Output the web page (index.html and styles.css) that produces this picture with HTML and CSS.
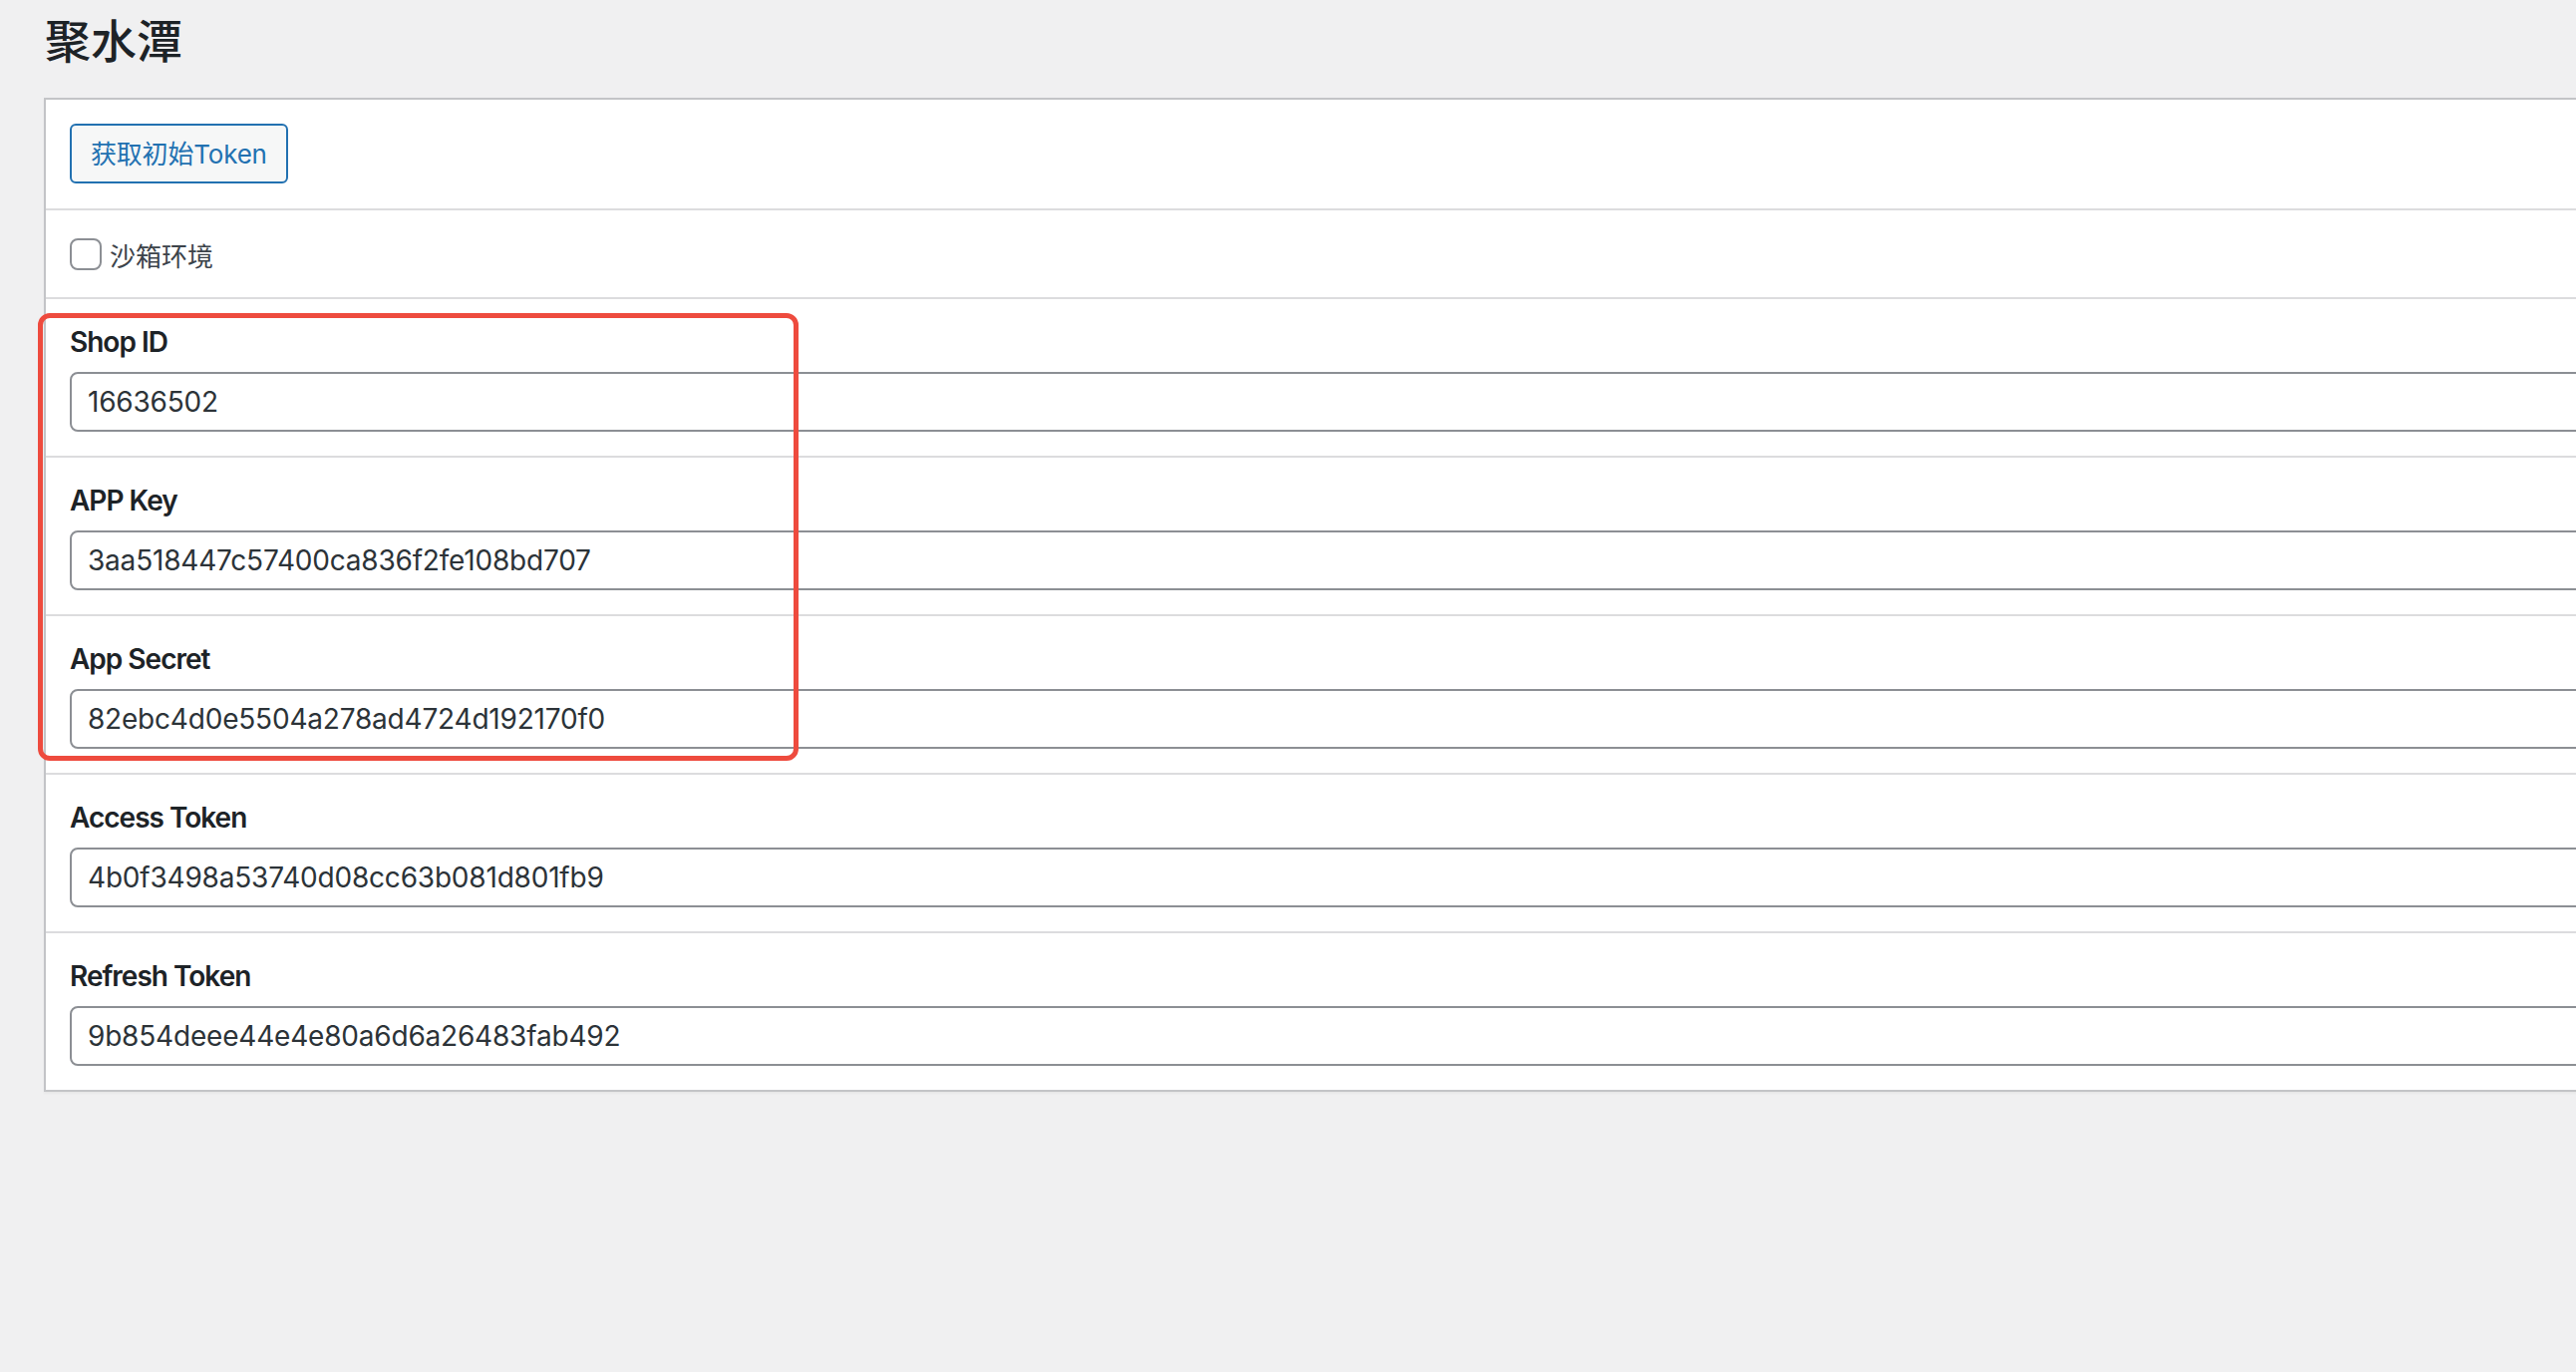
FILE: index.html
```html
<!DOCTYPE html>
<html lang="zh-CN">
<head>
<meta charset="utf-8">
<title>聚水潭</title>
<link rel="stylesheet" href="styles.css">
</head>
<body>
<div class="page">
  <h1 class="title">聚水潭</h1>
  <div class="card">
    <div class="row row-button">
      <button class="btn" type="button">获取初始Token</button>
    </div>
    <div class="row row-check">
      <label class="check-label"><span class="checkbox"></span><span>沙箱环境</span></label>
    </div>
    <div class="row field">
      <label class="field-label">Shop ID</label>
      <input class="field-input" type="text" value="16636502">
    </div>
    <div class="row field">
      <label class="field-label">APP Key</label>
      <input class="field-input" type="text" value="3aa518447c57400ca836f2fe108bd707">
    </div>
    <div class="row field">
      <label class="field-label">App Secret</label>
      <input class="field-input" type="text" value="82ebc4d0e5504a278ad4724d192170f0">
    </div>
    <div class="row field">
      <label class="field-label">Access Token</label>
      <input class="field-input" type="text" value="4b0f3498a53740d08cc63b081d801fb9">
    </div>
    <div class="row field last">
      <label class="field-label">Refresh Token</label>
      <input class="field-input" type="text" value="9b854deee44e4e80a6d6a26483fab492">
    </div>
  </div>
  <div class="highlight"></div>
</div>
</body>
</html>
```
FILE: styles.css
```css
html, body {
  margin: 0;
  padding: 0;
  overflow: hidden;
  background: #f0f0f1;
}
body {
  font-family: Inter, "Noto Sans CJK SC", "Noto Sans", sans-serif;
  color: #1d2327;
}
.page {
  position: relative;
  width: 2584px;
  height: 1376px;
  overflow: hidden;
  padding-left: 44px;
  box-sizing: border-box;
}
.title {
  margin: 8px 0 30px 1px;
  font-family: "Noto Sans CJK SC", sans-serif;
  font-size: 46px;
  line-height: 60px;
  font-weight: 500;
  color: #1d2327;
}
.card {
  width: 2800px;
  background: #fff;
  border: 2px solid #c3c4c7;
  box-shadow: 0 2px 2px rgba(0, 0, 0, 0.04);
}
.row {
  padding: 0 24px;
  border-bottom: 2px solid #dcdcde;
}
.row.last {
  border-bottom: none;
}
.row-button {
  padding-top: 24px;
  padding-bottom: 25px;
}
.btn {
  display: block;
  height: 60px;
  padding: 0 19px;
  border: 2px solid #2271b1;
  border-radius: 6px;
  background: #f6f7f7;
  color: #2271b1;
  font-family: Inter, "Noto Sans CJK SC", sans-serif;
  font-size: 26px;
  letter-spacing: -0.2px;
  line-height: 58px;
}
.row-check {
  padding-top: 28px;
  padding-bottom: 27px;
}
.check-label {
  display: flex;
  align-items: center;
  gap: 8px;
  height: 32px;
  font-family: "Noto Sans CJK SC", sans-serif;
  font-size: 26px;
  color: #3c434a;
}
.checkbox {
  width: 32px;
  height: 32px;
  box-sizing: border-box;
  border: 2px solid #8c8f94;
  border-radius: 8px;
  background: #fff;
}
.field {
  display: flex;
  flex-direction: column;
  gap: 12px;
  padding-top: 25px;
  padding-bottom: 24px;
}
.field-label {
  font-size: 28px;
  line-height: 36px;
  font-weight: 600;
  letter-spacing: -1px;
  color: #1d2327;
}
.field-input {
  width: 100%;
  height: 60px;
  box-sizing: border-box;
  padding: 0 16px;
  border: 2px solid #8c8f94;
  border-radius: 8px;
  background: #fff;
  color: #2c3338;
  font-family: Inter, sans-serif;
  font-size: 28px;
  letter-spacing: -0.2px;
  outline: none;
}
.highlight {
  position: absolute;
  left: 38px;
  top: 314px;
  width: 763px;
  height: 449px;
  box-sizing: border-box;
  border: 5px solid #ee4b3e;
  border-radius: 12px;
  pointer-events: none;
}
```
